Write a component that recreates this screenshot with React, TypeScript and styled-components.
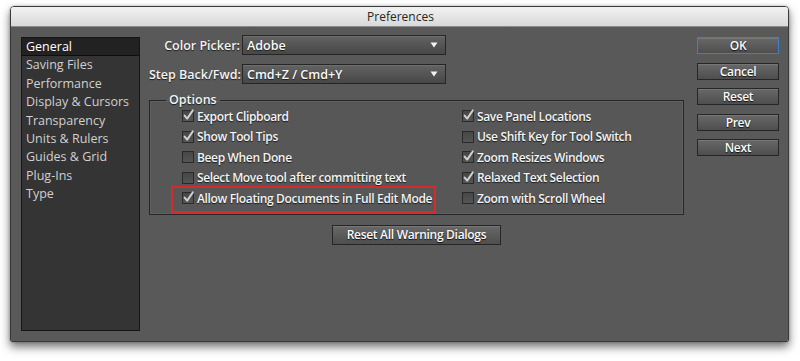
import React from "react";
import styled, { createGlobalStyle } from "styled-components";

const GlobalStyle = createGlobalStyle`
  html, body {
    margin: 0;
    padding: 0;
    background: #ffffff;
  }
  body {
    font-family: "Open Sans", "Liberation Sans", sans-serif;
  }
`;

const PANELS = [
  "General",
  "Saving Files",
  "Performance",
  "Display & Cursors",
  "Transparency",
  "Units & Rulers",
  "Guides & Grid",
  "Plug-Ins",
  "Type",
];

const LEFT_OPTIONS = [
  { label: "Export Clipboard", checked: true },
  { label: "Show Tool Tips", checked: true },
  { label: "Beep When Done", checked: false },
  { label: "Select Move tool after committing text", checked: false },
  { label: "Allow Floating Documents in Full Edit Mode", checked: true, marked: true },
];

const RIGHT_OPTIONS = [
  { label: "Save Panel Locations", checked: true },
  { label: "Use Shift Key for Tool Switch", checked: false },
  { label: "Zoom Resizes Windows", checked: true },
  { label: "Relaxed Text Selection", checked: true },
  { label: "Zoom with Scroll Wheel", checked: false },
];

const DIALOG_BUTTONS = ["OK", "Cancel", "Reset", "Prev", "Next"];

const Checkbox = ({ checked }: { checked: boolean }) => (
  <CheckBoxFrame>
    {checked && (
      <svg width="13" height="13" viewBox="0 0 13 13">
        <path
          d="M2.6 6.6 L5.2 9.6 L10.8 1.4"
          fill="none"
          stroke="#d0d0d0"
          strokeWidth="2"
          strokeLinecap="round"
          strokeLinejoin="round"
        />
      </svg>
    )}
  </CheckBoxFrame>
);

const Select = ({ value }: { value: string }) => (
  <SelectBox>
    <span>{value}</span>
    <svg width="8" height="6" viewBox="0 0 8 6">
      <path d="M0.5 0.5 L7.5 0.5 L4 5.5 Z" fill="#f2f2f2" />
    </svg>
  </SelectBox>
);

const Option = ({ label, checked, marked }: { label: string; checked: boolean; marked?: boolean }) => (
  <OptionRow marked={marked}>
    <Checkbox checked={checked} />
    <OptionLabel>{label}</OptionLabel>
  </OptionRow>
);

const App = () => {
  return (
    <>
      <GlobalStyle />
      <Page>
        <Window>
          <TitleBar>Preferences</TitleBar>
          <Body>
            <PanelList>
              {PANELS.map((name, i) => (
                <PanelItem key={name} selected={i === 0}>
                  {name}
                </PanelItem>
              ))}
            </PanelList>

            <Main>
              <FieldGrid>
                <FieldLabel>Color Picker:</FieldLabel>
                <Select value="Adobe" />
                <FieldLabel>Step Back/Fwd:</FieldLabel>
                <Select value="Cmd+Z / Cmd+Y" />
              </FieldGrid>

              <OptionsGroup>
                <Legend>Options</Legend>
                <OptionsGrid>
                  <OptionColumn>
                    {LEFT_OPTIONS.map((o) => (
                      <Option key={o.label} {...o} />
                    ))}
                  </OptionColumn>
                  <OptionColumn>
                    {RIGHT_OPTIONS.map((o) => (
                      <Option key={o.label} {...o} />
                    ))}
                  </OptionColumn>
                </OptionsGrid>
              </OptionsGroup>

              <ResetRow>
                <Button wide>Reset All Warning Dialogs</Button>
              </ResetRow>
            </Main>

            <ButtonColumn>
              {DIALOG_BUTTONS.map((b, i) => (
                <Button key={b} primary={i === 0}>
                  {b}
                </Button>
              ))}
            </ButtonColumn>
          </Body>
        </Window>
      </Page>
    </>
  );
};

const Page = styled.div`
  width: 800px;
  height: 361px;
  padding: 6px 0 0 10px;
  box-sizing: border-box;
`;

const Window = styled.div`
  width: 779px;
  height: 336px;
  display: flex;
  flex-direction: column;
  border-radius: 4px 4px 2px 2px;
  overflow: hidden;
  border: 1px solid #3a3a3a;
  box-sizing: border-box;
  box-shadow: 0 5px 10px rgba(0, 0, 0, 0.55), 0 0 3px rgba(0, 0, 0, 0.25);
`;

const TitleBar = styled.div`
  height: 19px;
  flex-shrink: 0;
  display: flex;
  align-items: center;
  justify-content: center;
  background: linear-gradient(#f2f2f2, #d9d9d9);
  border-bottom: 1px solid #8a8a8a;
  font-size: 12px;
  color: #262626;
  padding-left: 2px;
`;

const Body = styled.div`
  flex: 1;
  display: flex;
  align-items: flex-start;
  background: #595959;
  padding: 8px 9px 10px 10px;
  gap: 9px;
`;

const PanelList = styled.div`
  width: 119px;
  height: 294px;
  margin-top: 2px;
  flex-shrink: 0;
  background: #343434;
  border: 1px solid #151515;
  box-sizing: border-box;
  display: flex;
  flex-direction: column;
`;

const PanelItem = styled.div<{ selected?: boolean }>`
  height: 18.4px;
  line-height: 18px;
  padding-left: 4px;
  font-size: 12.5px;
  color: ${(p) => (p.selected ? "#ffffff" : "#d0d0d0")};
  background: ${(p) => (p.selected ? "#222222" : "transparent")};
  border-bottom: 1px solid ${(p) => (p.selected ? "#0e0e0e" : "transparent")};
  box-sizing: border-box;
  white-space: nowrap;
`;

const Main = styled.div`
  width: 535px;
  display: flex;
  flex-direction: column;
`;

const FieldGrid = styled.div`
  display: grid;
  grid-template-columns: 91px 204px;
  grid-auto-rows: 20px;
  column-gap: 2px;
  row-gap: 9px;
  align-items: center;
`;

const FieldLabel = styled.div`
  text-align: right;
  font-size: 12.5px;
  font-weight: 600;
  color: #f4f4f4;
  text-shadow: 0 1px 1px #1c1c1c;
  white-space: nowrap;
`;

const SelectBox = styled.div`
  height: 20px;
  box-sizing: border-box;
  border: 1px solid #262626;
  background: linear-gradient(#636363, #474747);
  display: flex;
  align-items: center;
  justify-content: space-between;
  padding: 0 7px 0 4px;
  font-size: 12.5px;
  font-weight: 600;
  color: #fafafa;
  text-shadow: 0 1px 1px #1c1c1c;
  box-shadow: inset 0 1px 0 rgba(255, 255, 255, 0.08);
`;

const OptionsGroup = styled.fieldset`
  margin: 10px 0 0 0;
  padding: 0 0 1px 0;
  border: 1px solid #262626;
  box-shadow: inset 0 0 0 1px rgba(255, 255, 255, 0.06);
  background: #575757;
  min-width: 0;
`;

const Legend = styled.legend`
  margin-left: 16px;
  padding: 0 3px;
  font-size: 12.5px;
  font-weight: 600;
  color: #f4f4f4;
  text-shadow: 0 1px 1px #1c1c1c;
  line-height: 12px;
`;

const OptionsGrid = styled.div`
  display: grid;
  grid-template-columns: 280px 1fr;
  padding: 0 0 0 32px;
`;

const OptionColumn = styled.div`
  display: flex;
  flex-direction: column;
`;

const OptionRow = styled.div<{ marked?: boolean }>`
  height: 20.5px;
  display: flex;
  align-items: center;
  gap: 3px;
  flex-shrink: 0;
  ${(p) =>
    p.marked &&
    `
    box-sizing: content-box;
    width: 252px;
    margin: -2px 0 0 -11px;
    padding: 0 0 2px 9px;
    border: 2px solid #d42a30;
  `}
`;

const CheckBoxFrame = styled.span`
  width: 12px;
  height: 12px;
  flex-shrink: 0;
  box-sizing: border-box;
  border: 1px solid #2a2a2a;
  background: linear-gradient(#474747, #555555);
  display: flex;
  align-items: flex-end;
  justify-content: center;
  svg {
    flex-shrink: 0;
    margin-bottom: -1px;
  }
`;

const OptionLabel = styled.span`
  font-size: 12px;
  font-weight: 600;
  letter-spacing: -0.35px;
  color: #f4f4f4;
  text-shadow: 0 1px 1px #1c1c1c;
  white-space: nowrap;
`;

const ResetRow = styled.div`
  display: flex;
  justify-content: center;
  margin-top: 10px;
`;

const ButtonColumn = styled.div`
  width: 82px;
  margin: 2px 0 0 4px;
  display: flex;
  flex-direction: column;
  gap: 8.5px;
`;

const Button = styled.div<{ primary?: boolean; wide?: boolean }>`
  height: ${(p) => (p.wide ? "20px" : "17px")};
  width: ${(p) => (p.wide ? "169px" : "82px")};
  box-sizing: border-box;
  display: flex;
  align-items: center;
  justify-content: center;
  border: 1px solid ${(p) => (p.primary ? "#3d7fc8" : "#262626")};
  background: linear-gradient(#686868, #4e4e4e);
  box-shadow: inset 0 1px 0 rgba(255, 255, 255, 0.1);
  font-size: 12px;
  font-weight: 600;
  letter-spacing: -0.3px;
  color: #fafafa;
  text-shadow: 0 1px 1px #111111;
  white-space: nowrap;
`;

export default App;
